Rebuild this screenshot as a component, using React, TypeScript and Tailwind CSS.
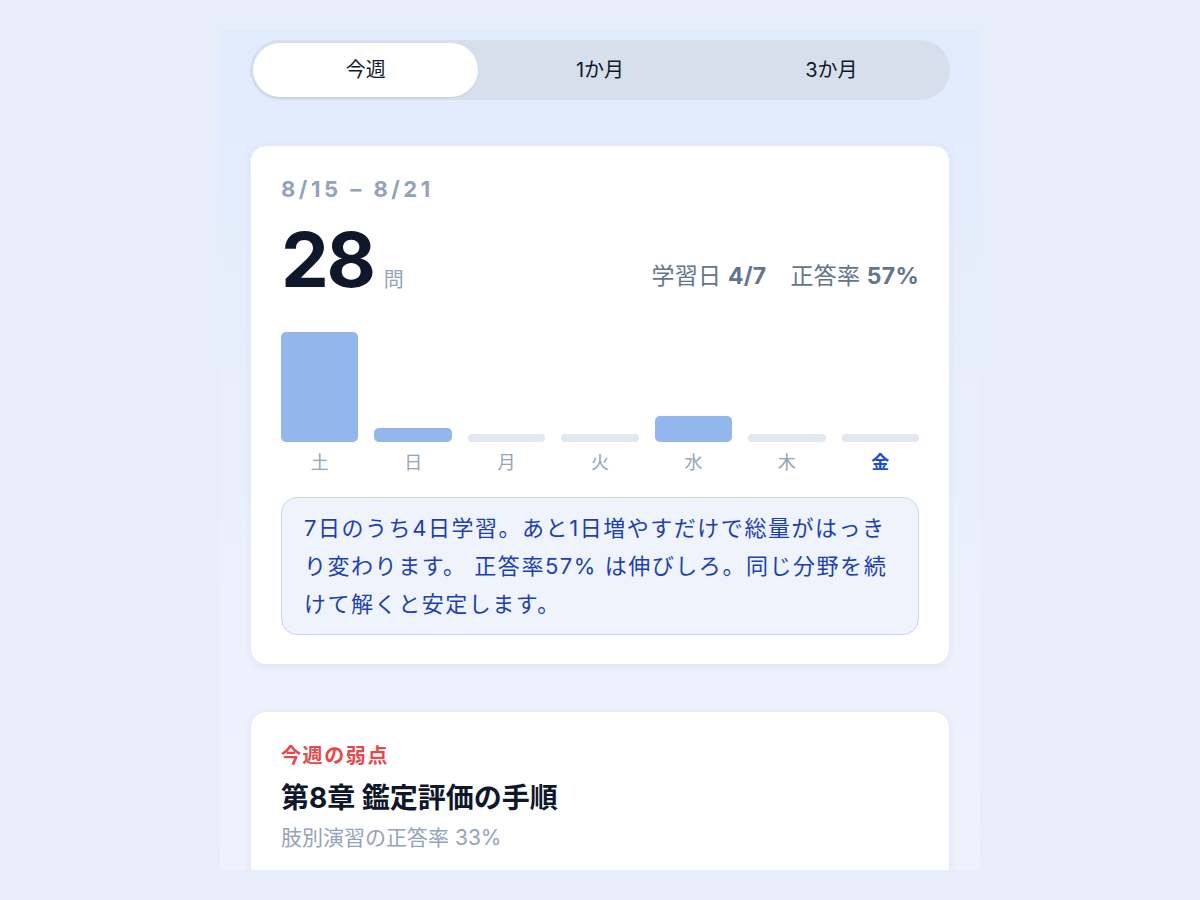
import React from "react";

const days = [
  { label: "土", height: 110 },
  { label: "日", height: 14 },
  { label: "月", height: 0 },
  { label: "火", height: 0 },
  { label: "水", height: 26 },
  { label: "木", height: 0 },
  { label: "金", height: 0, today: true },
];

export default function App() {
  return (
    <div
      className="min-h-screen w-full bg-[#e8eef9] pt-[30px]"
      style={{ fontFamily: "Inter, 'Noto Sans CJK JP', 'Noto Sans', sans-serif" }}
    >
      <div className="mx-auto h-[840px] w-[760px] overflow-hidden bg-gradient-to-b from-[#e0ebfc] via-[#eaf0fb] to-[#eef2fc] px-[30px] pt-[10px]">
        {/* Period tabs */}
        <div className="grid h-[60px] grid-cols-3 rounded-full bg-[#d6dfeb] p-[3px]">
          <button className="mr-[6px] rounded-full bg-white text-[20px] text-[#111827] shadow-[0_1px_2px_rgba(15,23,42,0.08)]">
            今週
          </button>
          <button className="rounded-full text-[20px] text-[#111827]">1か月</button>
          <button className="rounded-full text-[20px] text-[#111827]">3か月</button>
        </div>

        {/* Summary card */}
        <div className="mt-[45px] rounded-2xl border border-[#e6ebf3] bg-white px-[30px] pb-[29px] pt-[28px] shadow-[0_2px_8px_rgba(30,58,110,0.06)]">
          <div className="text-[22px] font-bold leading-[30px] tracking-[0.16em] text-[#94a3b8]">8/15 – 8/21</div>
          <div className="mt-[15px] flex items-end justify-between">
            <div className="flex items-end gap-[10px]">
              <span className="text-[76px] font-bold leading-[80px] tracking-[-0.03em] text-[#0f172a]">28</span>
              <span className="mb-[4px] text-[20px] text-[#94a3b8]">問</span>
            </div>
            <div className="mb-[6px] flex gap-[24px] text-[23px] tracking-[0.01em] text-[#64748b]">
              <span>
                学習日 <span className="font-bold">4/7</span>
              </span>
              <span>
                正答率 <span className="font-bold">57%</span>
              </span>
            </div>
          </div>

          {/* Bar chart */}
          <div className="mt-[33px] grid grid-cols-7 gap-[16px]">
            {days.map((d) => (
              <div key={d.label} className="flex flex-col items-stretch">
                <div className="flex h-[110px] items-end">
                  {d.height > 0 ? (
                    <div className="w-full rounded-[5px] bg-[#93b7ec]" style={{ height: `${d.height}px` }} />
                  ) : (
                    <div className="h-[8px] w-full rounded-full bg-[#e2e8f0]" />
                  )}
                </div>
                <div
                  className={
                    d.today
                      ? "mt-[7px] text-center text-[18px] font-bold text-[#1d4ed8]"
                      : "mt-[7px] text-center text-[18px] text-[#94a3b8]"
                  }
                >
                  {d.label}
                </div>
              </div>
            ))}
          </div>

          {/* Insight */}
          <div className="mt-[21px] rounded-2xl border-[1.5px] border-[#c6d6f0] bg-[#eef3fc] px-[22px] py-[11px] text-[22px] leading-[38px] tracking-[0.07em] text-[#1e40af]">
            7日のうち4日学習。あと1日増やすだけで総量がはっきり変わります。 正答率57% は伸びしろ。同じ分野を続けて解くと安定します。
          </div>
        </div>

        {/* Weak point card */}
        <div className="mt-[46px] h-[200px] rounded-2xl border border-[#e6ebf3] bg-white px-[30px] pt-[29px] shadow-[0_2px_8px_rgba(30,58,110,0.06)]">
          <div className="text-[20px] font-bold tracking-[0.08em] text-[#e5484d]">今週の弱点</div>
          <div className="mt-[6px] text-[28px] font-bold text-[#0f172a]">第8章 鑑定評価の手順</div>
          <div className="mt-[3px] text-[21px] text-[#94a3b8]">肢別演習の正答率 33%</div>
        </div>
      </div>
    </div>
  );
}
